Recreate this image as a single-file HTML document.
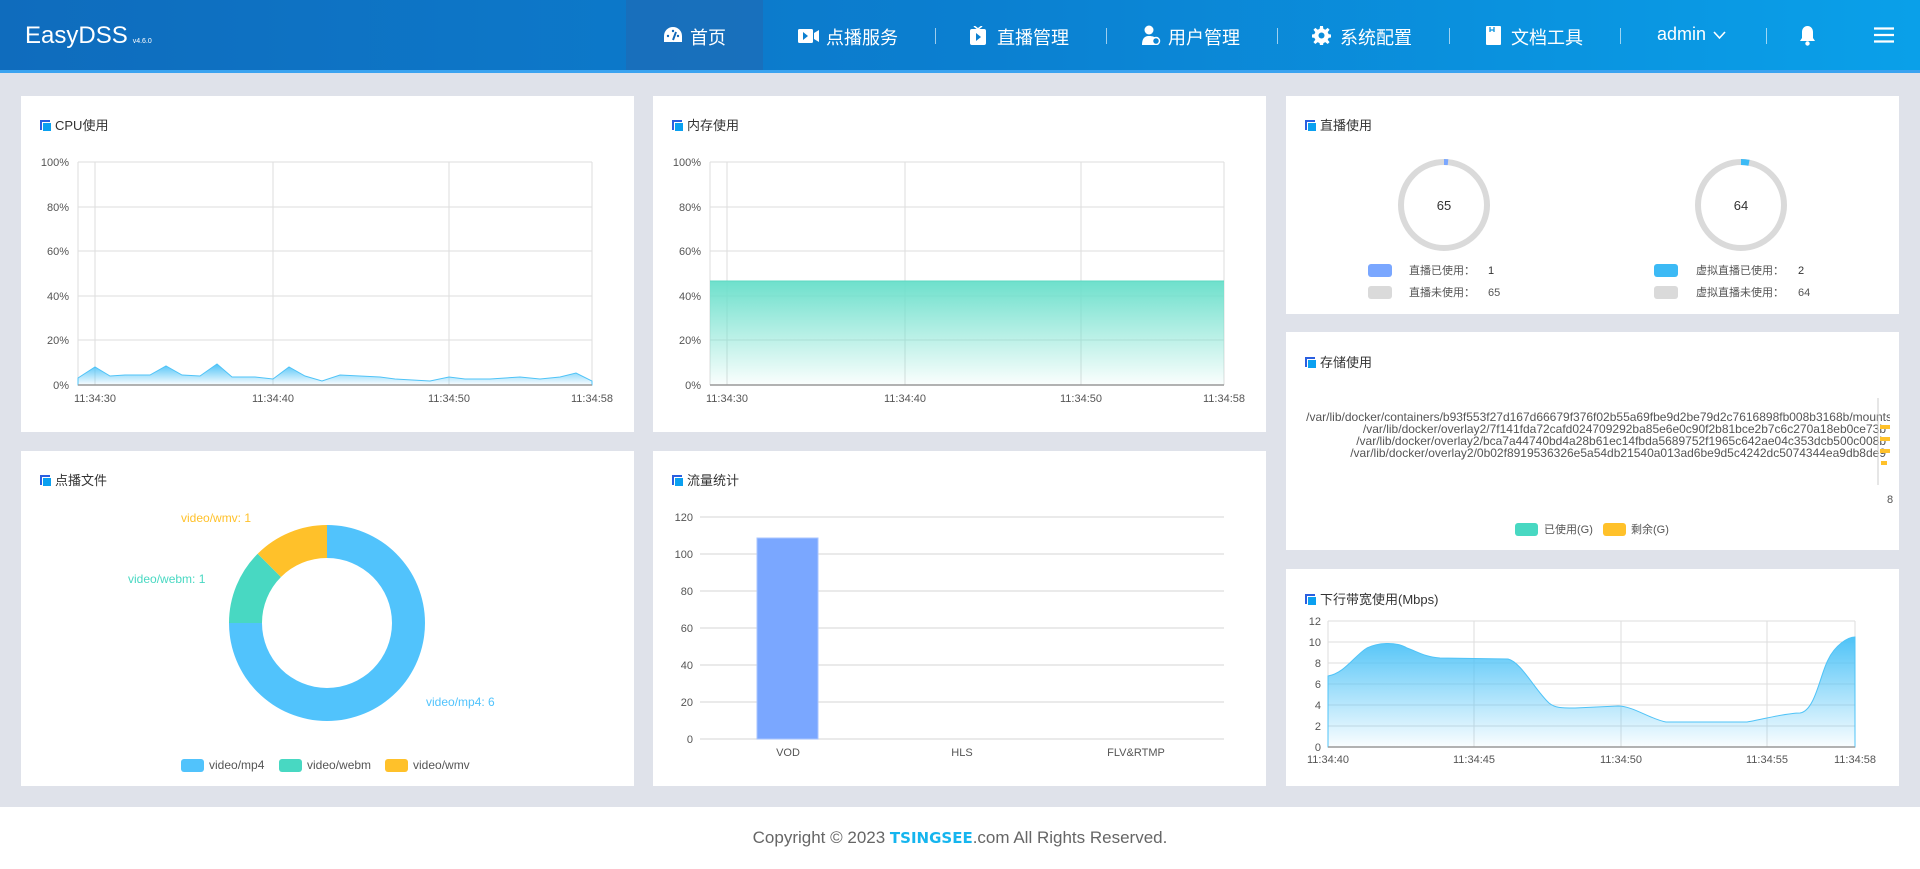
<!DOCTYPE html>
<html><head><meta charset="utf-8">
<style>
*{margin:0;padding:0;box-sizing:border-box}
body{width:1920px;height:869px;overflow:hidden;background:#dfe2ea;font-family:"Liberation Sans","Noto Sans CJK SC",sans-serif;position:relative}
.hdr{position:absolute;left:0;top:0;width:1920px;height:73px;background:linear-gradient(90deg,#0f6cbd 0%,#0b7fd0 50%,#0aa0e9 100%);border-bottom:3px solid #3aa3f0}
.logo{position:absolute;left:25px;top:22px;color:#fff;font-size:24px}
.logo small{font-size:7px;margin-left:5px}
.hl{position:absolute;left:626px;top:0;width:137px;height:70px;background:rgba(40,100,170,0.45)}
.nav{position:absolute;top:24px;color:#fff;font-size:18px;white-space:nowrap}
.sep{position:absolute;top:28px;width:1px;height:16px;background:rgba(255,255,255,0.6)}
.ic{position:absolute}
.card{position:absolute;background:#fff}
.ttl{position:absolute;font-size:13px;color:#333;white-space:nowrap}
.ti{display:inline-block;position:relative;width:11px;height:11px;vertical-align:-1px;margin-right:4px}
.ti:before{content:"";position:absolute;left:0;top:0;width:8px;height:8px;border-left:2px solid #2a5fe0;border-top:2px solid #2a5fe0}
.ti:after{content:"";position:absolute;left:3px;top:3px;width:8px;height:8px;background:#0aa0f0}
.foot{position:absolute;left:0;top:807px;width:1920px;height:62px;background:#fff;text-align:center;font-size:17px;color:#666;padding-top:21px}
.foot b{color:#15b5ee;font-family:"DejaVu Sans",sans-serif;letter-spacing:0px;font-size:15px;font-weight:bold}
svg text{font-family:"Liberation Sans","Noto Sans CJK SC",sans-serif}
</style></head><body>
<div class="hdr">
 <div class="logo">EasyDSS<small>v4.6.0</small></div>
 <div class="hl"></div>
 <svg class="ic" style="left:663px;top:26px" width="20" height="18" viewBox="0 0 20 18"><path d="M10 1A9 9 0 0 0 1 10v6h18v-6A9 9 0 0 0 10 1z" fill="#fff"/><path d="M10 14L13 6" stroke="#1168b8" stroke-width="2"/><circle cx="5" cy="10" r="1.2" fill="#1168b8"/><circle cx="15" cy="10" r="1.2" fill="#1168b8"/><circle cx="10" cy="5" r="1.2" fill="#1168b8"/></svg>
 <div class="nav" style="left:690px">首页</div>
 <svg class="ic" style="left:798px;top:28px" width="22" height="16" viewBox="0 0 22 16"><rect x="0" y="1" width="15" height="14" rx="1.5" fill="#fff"/><path d="M5 4v8l5-4z" fill="#0b7fd0"/><path d="M16 5l5-3v12l-5-3z" fill="#fff"/></svg>
 <div class="nav" style="left:826px">点播服务</div>
 <div class="sep" style="left:935px"></div>
 <svg class="ic" style="left:970px;top:26px" width="16" height="19" viewBox="0 0 16 19"><path d="M4 0l4 3 4-3" stroke="#fff" stroke-width="1.6" fill="none"/><rect x="0" y="3" width="16" height="16" rx="2" fill="#fff"/><path d="M6 7v8l5-4z" fill="#0b80d0"/></svg>
 <div class="nav" style="left:997px">直播管理</div>
 <div class="sep" style="left:1106px"></div>
 <svg class="ic" style="left:1141px;top:25px" width="20" height="20" viewBox="0 0 20 20"><circle cx="8" cy="5" r="4.5" fill="#fff"/><path d="M1 20c0-7 3-9 7-9s6 1 7 3v6z" fill="#fff"/><circle cx="15" cy="16" r="3.5" fill="#0b86d6" stroke="#fff" stroke-width="1.5"/></svg>
 <div class="nav" style="left:1168px">用户管理</div>
 <div class="sep" style="left:1277px"></div>
 <svg class="ic" style="left:1312px;top:26px" width="19" height="19" viewBox="0 0 20 20"><path d="M8.5 0h3l.5 3 2 1 2.5-2 2 2-2 2.5 1 2 3 .5v3l-3 .5-1 2 2 2.5-2 2-2.5-2-2 1-.5 3h-3l-.5-3-2-1-2.5 2-2-2 2-2.5-1-2-3-.5v-3l3-.5 1-2-2-2.5 2-2 2.5 2 2-1z" fill="#fff"/><circle cx="10" cy="10" r="3.2" fill="#0a8dda"/></svg>
 <div class="nav" style="left:1340px">系统配置</div>
 <div class="sep" style="left:1449px"></div>
 <svg class="ic" style="left:1486px;top:26px" width="15" height="19" viewBox="0 0 15 19"><rect x="0" y="0" width="15" height="19" rx="1" fill="#fff"/><path d="M4 1v5M8 1v5M4 4h4" stroke="#0a93de" stroke-width="1.3"/></svg>
 <div class="nav" style="left:1511px">文档工具</div>
 <div class="sep" style="left:1620px"></div>
 <div class="nav" style="left:1657px">admin</div>
 <svg class="ic" style="left:1713px;top:31px" width="13" height="9" viewBox="0 0 13 9"><path d="M1 1l5.5 6 5.5-6" stroke="#fff" stroke-width="1.6" fill="none"/></svg>
 <div class="sep" style="left:1766px"></div>
 <svg class="ic" style="left:1799px;top:25px" width="17" height="21" viewBox="0 0 17 21"><path d="M8.5 1c-3.5 0-5.5 3-5.5 6v6l-2 3h15l-2-3V7c0-3-2-6-5.5-6z" fill="#fff"/><circle cx="8.5" cy="18.5" r="2.2" fill="#fff"/></svg>
 <svg class="ic" style="left:1874px;top:27px" width="20" height="16" viewBox="0 0 20 16"><path d="M0 1.5h20M0 8h20M0 14.5h20" stroke="#fff" stroke-width="2.2"/></svg>
</div>

<div class="card" style="left:21px;top:96px;width:613px;height:336px"></div>
<div class="card" style="left:653px;top:96px;width:613px;height:336px"></div>
<div class="card" style="left:1286px;top:96px;width:613px;height:218px"></div>
<div class="card" style="left:1286px;top:332px;width:613px;height:218px"></div>
<div class="card" style="left:21px;top:451px;width:613px;height:335px"></div>
<div class="card" style="left:653px;top:451px;width:613px;height:335px"></div>
<div class="card" style="left:1286px;top:569px;width:613px;height:217px"></div>

<div class="ttl" style="left:40px;top:115px"><span class="ti"></span>CPU使用</div>
<div class="ttl" style="left:672px;top:115px"><span class="ti"></span>内存使用</div>
<div class="ttl" style="left:1305px;top:115px"><span class="ti"></span>直播使用</div>
<div class="ttl" style="left:1305px;top:352px"><span class="ti"></span>存储使用</div>
<div class="ttl" style="left:40px;top:470px"><span class="ti"></span>点播文件</div>
<div class="ttl" style="left:672px;top:470px"><span class="ti"></span>流量统计</div>
<div class="ttl" style="left:1305px;top:589px"><span class="ti"></span>下行带宽使用(Mbps)</div>

<svg style="position:absolute;left:0;top:0" width="1920" height="869" viewBox="0 0 1920 869">
<defs>
 <linearGradient id="gb" x1="0" y1="0" x2="0" y2="1"><stop offset="0" stop-color="#4fc3f7"/><stop offset="1" stop-color="#4fc3f7" stop-opacity="0.03"/></linearGradient>
 <linearGradient id="gt" x1="0" y1="0" x2="0" y2="1"><stop offset="0" stop-color="#6ee0cc"/><stop offset="1" stop-color="#6ee0cc" stop-opacity="0.03"/></linearGradient>
</defs>
<g font-size="11" fill="#555">
 <!-- CPU -->
 <g stroke="#ddd" stroke-width="1" fill="none">
  <path d="M78 162H592M78 207H592M78 251H592M78 296H592M78 340H592"/>
  <path d="M78 162V385M95 162V385M273 162V385M449 162V385M592 162V385"/>
 </g>
 <path d="M78 378L95 367L110 376L125 375L150 375L166 366L182 375L200 376L217 364L232 377L255 377L273 379L289 367L305 376L322 381L340 375L380 377L395 379L430 381L449 377L465 379L490 379L520 377L540 379L560 377L576 373L592 381V385H78Z" fill="url(#gb)" stroke="#4fc3f7" stroke-width="1"/>
 <path d="M78 385H592" stroke="#999" stroke-width="1.5"/>
 <g text-anchor="end"><text x="69" y="166">100%</text><text x="69" y="211">80%</text><text x="69" y="255">60%</text><text x="69" y="300">40%</text><text x="69" y="344">20%</text><text x="69" y="389">0%</text></g>
 <g text-anchor="middle"><text x="95" y="402">11:34:30</text><text x="273" y="402">11:34:40</text><text x="449" y="402">11:34:50</text><text x="592" y="402">11:34:58</text></g>
 <!-- MEM -->
 <g stroke="#ddd" stroke-width="1" fill="none">
  <path d="M710 162H1224M710 207H1224M710 251H1224M710 296H1224M710 340H1224"/>
  <path d="M710 162V385M727 162V385M905 162V385M1081 162V385M1224 162V385"/>
 </g>
 <path d="M710 281H1224V385H710Z" fill="url(#gt)"/>
 <path d="M710 281H1224" stroke="#5fd8c2" stroke-width="1"/>
 <path d="M710 385H1224" stroke="#999" stroke-width="1.5"/>
 <g text-anchor="end"><text x="701" y="166">100%</text><text x="701" y="211">80%</text><text x="701" y="255">60%</text><text x="701" y="300">40%</text><text x="701" y="344">20%</text><text x="701" y="389">0%</text></g>
 <g text-anchor="middle"><text x="727" y="402">11:34:30</text><text x="905" y="402">11:34:40</text><text x="1081" y="402">11:34:50</text><text x="1224" y="402">11:34:58</text></g>
</g>
<!-- Live -->
<circle cx="1444" cy="205" r="43" fill="none" stroke="#dadada" stroke-width="6"/>
<path d="M1444 162A43 43 0 0 1 1448 162.2" fill="none" stroke="#7aa7ff" stroke-width="6"/>
<text x="1444" y="210" font-size="13" fill="#333" text-anchor="middle">65</text>
<circle cx="1741" cy="205" r="43" fill="none" stroke="#dadada" stroke-width="6"/>
<path d="M1741 162A43 43 0 0 1 1749 162.8" fill="none" stroke="#3cbaf5" stroke-width="6"/>
<text x="1741" y="210" font-size="13" fill="#333" text-anchor="middle">64</text>
<g font-size="11" fill="#555">
 <rect x="1368" y="264" width="24" height="13" rx="3" fill="#7aa7ff"/><text x="1409" y="274">直播已使用：</text><text x="1488" y="274" fill="#333">1</text>
 <rect x="1368" y="286" width="24" height="13" rx="3" fill="#dadada"/><text x="1409" y="296">直播未使用：</text><text x="1488" y="296">65</text>
 <rect x="1654" y="264" width="24" height="13" rx="3" fill="#3cbaf5"/><text x="1696" y="274">虚拟直播已使用：</text><text x="1798" y="274" fill="#333">2</text>
 <rect x="1654" y="286" width="24" height="13" rx="3" fill="#dadada"/><text x="1696" y="296">虚拟直播未使用：</text><text x="1798" y="296">64</text>
</g>
<!-- Storage -->
<svg x="1290" y="395" width="600" height="100">
 <g font-size="12" fill="#555" text-anchor="end">
  <text x="602" y="26">/var/lib/docker/containers/b93f553f27d167d66679f376f02b55a69fbe9d2be79d2c7616898fb008b3168b/mounts</text>
  <text x="596" y="38">/var/lib/docker/overlay2/7f141fda72cafd024709292ba85e6e0c90f2b81bce2b7c6c270a18eb0ce73b</text>
  <text x="596" y="50">/var/lib/docker/overlay2/bca7a44740bd4a28b61ec14fbda5689752f1965c642ae04c353dcb500c008b</text>
  <text x="596" y="62">/var/lib/docker/overlay2/0b02f8919536326e5a54db21540a013ad6be9d5c4242dc5074344ea9db8de9</text>
 </g>
 <path d="M588 3V90" stroke="#ccc"/>
 <rect x="590" y="30" width="10" height="4" fill="#ffc12a"/><rect x="590" y="42" width="10" height="4" fill="#ffc12a"/><rect x="590" y="54" width="10" height="4" fill="#ffc12a"/><rect x="591" y="66" width="6" height="4" fill="#ffc12a"/>
</svg>
<text x="1887" y="503" font-size="11" fill="#555">8</text>
<g font-size="11" fill="#555">
 <rect x="1515" y="523" width="23" height="13" rx="3" fill="#48d8c2"/><text x="1544" y="533">已使用(G)</text>
 <rect x="1603" y="523" width="23" height="13" rx="3" fill="#ffc12a"/><text x="1631" y="533">剩余(G)</text>
</g>
<!-- Pie -->
<g transform="translate(327 623)">
 <path d="M0 -98A98 98 0 1 1 -98 0H-65A65 65 0 1 0 0 -65Z" fill="#51c3fc"/>
 <path d="M-98 0A98 98 0 0 1 -69.3 -69.3L-46 -46A65 65 0 0 0 -65 0Z" fill="#48d8c2"/>
 <path d="M-69.3 -69.3A98 98 0 0 1 0 -98V-65A65 65 0 0 0 -46 -46Z" fill="#ffc12a"/>
</g>
<g font-size="12">
 <text x="181" y="522" fill="#ffc12a">video/wmv: 1</text>
 <text x="128" y="583" fill="#48d8c2">video/webm: 1</text>
 <text x="426" y="706" fill="#51c3fc">video/mp4: 6</text>
 <rect x="181" y="759" width="23" height="13" rx="3" fill="#51c3fc"/><text x="209" y="769" fill="#555">video/mp4</text>
 <rect x="279" y="759" width="23" height="13" rx="3" fill="#48d8c2"/><text x="307" y="769" fill="#555">video/webm</text>
 <rect x="385" y="759" width="23" height="13" rx="3" fill="#ffc12a"/><text x="413" y="769" fill="#555">video/wmv</text>
</g>
<!-- Bar -->
<g stroke="#ddd" stroke-width="1.2"><path d="M700 517H1224M700 554H1224M700 591H1224M700 628H1224M700 665H1224M700 702H1224M700 739H1224"/></g>
<rect x="757" y="538" width="61" height="201" fill="#7aa7ff" stroke="#a9c5ff"/>
<g font-size="11" fill="#555">
 <g text-anchor="end"><text x="693" y="521">120</text><text x="693" y="558">100</text><text x="693" y="595">80</text><text x="693" y="632">60</text><text x="693" y="669">40</text><text x="693" y="706">20</text><text x="693" y="743">0</text></g>
 <g text-anchor="middle"><text x="788" y="756">VOD</text><text x="962" y="756">HLS</text><text x="1136" y="756">FLV&amp;RTMP</text></g>
</g>
<!-- Bandwidth -->
<g stroke="#ddd" stroke-width="1" fill="none">
 <path d="M1328 621H1855M1328 642H1855M1328 663H1855M1328 684H1855M1328 705H1855M1328 726H1855"/>
 <path d="M1328 621V747M1474 621V747M1621 621V747M1767 621V747M1855 621V747"/>
</g>
<path d="M1328 676C1345 673 1355 655 1367 648C1377 643 1395 641 1407 648C1418 652 1425 657 1440 658L1508 659C1521 662 1535 690 1549 703C1555 708 1561 708 1575 708L1618 706C1633 706 1650 719 1666 722L1747 722C1760 720 1785 713 1800 713C1815 711 1820 675 1828 660C1835 645 1848 637 1855 637V747H1328Z" fill="url(#gb)" stroke="#4fc3f7" stroke-width="1"/>
<path d="M1328 747H1855" stroke="#999" stroke-width="1.5"/>
<g font-size="11" fill="#555">
 <g text-anchor="end"><text x="1321" y="625">12</text><text x="1321" y="646">10</text><text x="1321" y="667">8</text><text x="1321" y="688">6</text><text x="1321" y="709">4</text><text x="1321" y="730">2</text><text x="1321" y="751">0</text></g>
 <g text-anchor="middle"><text x="1328" y="763">11:34:40</text><text x="1474" y="763">11:34:45</text><text x="1621" y="763">11:34:50</text><text x="1767" y="763">11:34:55</text><text x="1855" y="763">11:34:58</text></g>
</g>
</svg>

<div class="foot">Copyright © 2023 <b>TSINGSEE</b>.com All Rights Reserved.</div>
</body></html>
